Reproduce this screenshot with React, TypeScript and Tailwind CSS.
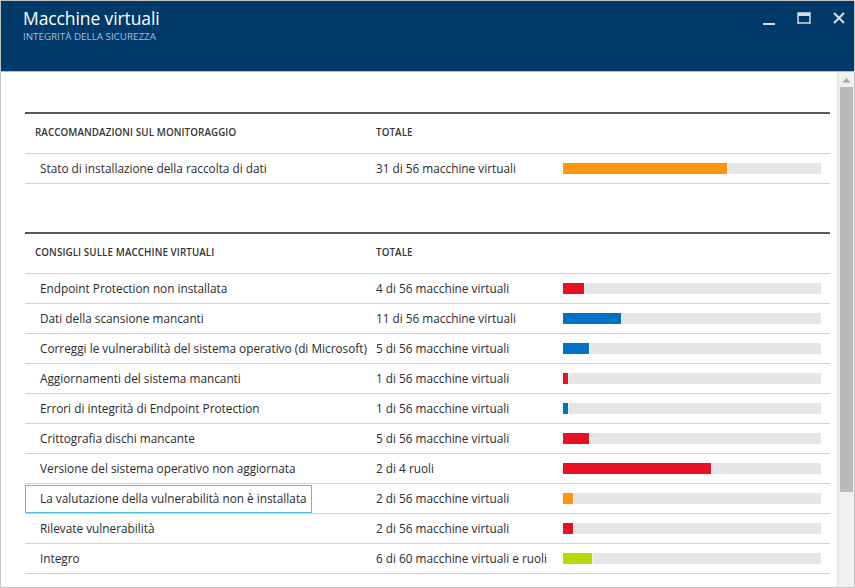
import React from "react";

type Row = { name: string; total: string; w: number; color: string; focus?: boolean };

const monitor: Row[] = [
  { name: "Stato di installazione della raccolta di dati", total: "31 di 56 macchine virtuali", w: 164, color: "#ff9412" },
];

const vms: Row[] = [
  { name: "Endpoint Protection non installata", total: "4 di 56 macchine virtuali", w: 21, color: "#e81123" },
  { name: "Dati della scansione mancanti", total: "11 di 56 macchine virtuali", w: 58, color: "#0072c6" },
  { name: "Correggi le vulnerabilità del sistema operativo (di Microsoft)", total: "5 di 56 macchine virtuali", w: 26, color: "#0072c6" },
  { name: "Aggiornamenti del sistema mancanti", total: "1 di 56 macchine virtuali", w: 5, color: "#e81123" },
  { name: "Errori di integrità di Endpoint Protection", total: "1 di 56 macchine virtuali", w: 5, color: "#0072c6" },
  { name: "Crittografia dischi mancante", total: "5 di 56 macchine virtuali", w: 26, color: "#e81123" },
  { name: "Versione del sistema operativo non aggiornata", total: "2 di 4 ruoli", w: 148, color: "#e81123" },
  { name: "La valutazione della vulnerabilità non è installata", total: "2 di 56 macchine virtuali", w: 10, color: "#ff9412", focus: true },
  { name: "Rilevate vulnerabilità", total: "2 di 56 macchine virtuali", w: 10, color: "#e81123" },
  { name: "Integro", total: "6 di 60 macchine virtuali e ruoli", w: 29, color: "#bad80a" },
];

function Section({ title, rows }: { title: string; rows: Row[] }) {
  return (
    <div className="border-t-2 border-[#5a5a5a]">
      <div className="grid grid-cols-[351px_187px_1fr] h-[40px] items-center border-b border-[#d2d2d2] text-[9.8px] font-semibold text-[#333] tracking-[0.1px]">
        <div className="pl-[10px]">{title}</div>
        <div>TOTALE</div>
        <div />
      </div>
      {rows.map((r) => (
        <div
          key={r.name}
          className="grid grid-cols-[351px_187px_1fr] h-[30px] items-center border-b border-[#d2d2d2] text-[11.8px] text-[#2b2b2b]"
        >
          <div className="h-full flex items-center">
            {r.focus ? (
              <span className="h-[28px] flex items-center pl-[14px] pr-[4px] border border-[#4fc0ee]">{r.name}</span>
            ) : (
              <span className="pl-[15px]">{r.name}</span>
            )}
          </div>
          <div>{r.total}</div>
          <div className="flex pr-[8px]">
            <div className="flex h-[11px] w-[258px] bg-[#e6e6e6]">
              <div className="h-full" style={{ width: r.w, backgroundColor: r.color }} />
              <div className="h-full w-[1px] bg-[#f4f4f4]" />
            </div>
          </div>
        </div>
      ))}
    </div>
  );
}

export default function App() {
  return (
    <div
      className="w-[855px] h-[588px] border border-[#c4c4c4] bg-white flex flex-col overflow-hidden"
      style={{ fontFamily: '"Segoe UI", "Open Sans", "Noto Sans", sans-serif' }}
    >
      <div className="h-[71px] bg-[#003a6b] flex justify-between border-b border-[#b9b9b9] shrink-0">
        <div className="pl-[22px] pt-[5px]">
          <div className="text-[17.5px] leading-[25px] text-white tracking-[-0.1px]">Macchine virtuali</div>
          <div className="text-[9.8px] leading-[12px] text-[#a9bed3] mt-[0px]">INTEGRITÀ DELLA SICUREZZA</div>
        </div>
        <div className="flex items-start pt-[10px] pr-[8px] gap-[21px] text-[#d6dfe9]">
          <svg width="14" height="14" viewBox="0 0 14 14" className="mt-[1px]">
            <rect x="1" y="11" width="12" height="2" fill="currentColor" />
          </svg>
          <svg width="14" height="14" viewBox="0 0 14 14">
            <rect x="1" y="2" width="12" height="10" fill="none" stroke="currentColor" strokeWidth="1.5" />
            <rect x="1" y="2" width="12" height="3" fill="currentColor" />
          </svg>
          <svg width="14" height="14" viewBox="0 0 14 14">
            <path d="M2 2 L12 12 M12 2 L2 12" stroke="currentColor" strokeWidth="2" />
          </svg>
        </div>
      </div>
      <div className="flex-1 flex min-h-0">
        <div className="flex-1 pl-[24px] pr-[7px] pt-[40px]">
          <Section title="RACCOMANDAZIONI SUL MONITORAGGIO" rows={monitor} />
          <div className="h-[48px]" />
          <Section title="CONSIGLI SULLE MACCHINE VIRTUALI" rows={vms} />
        </div>
        <div className="w-[17px] bg-[#f0f0f0] border-l border-[#e2e2e2] flex flex-col items-center pt-[5px]">
          <svg width="9" height="6" viewBox="0 0 9 6">
            <path d="M0.5 5.5 L4.5 1 L8.5 5.5 Z" fill="#a8a8a8" />
          </svg>
          <div className="w-[13px] h-[405px] bg-[#bababa] mt-[4px]" />
        </div>
      </div>
    </div>
  );
}
